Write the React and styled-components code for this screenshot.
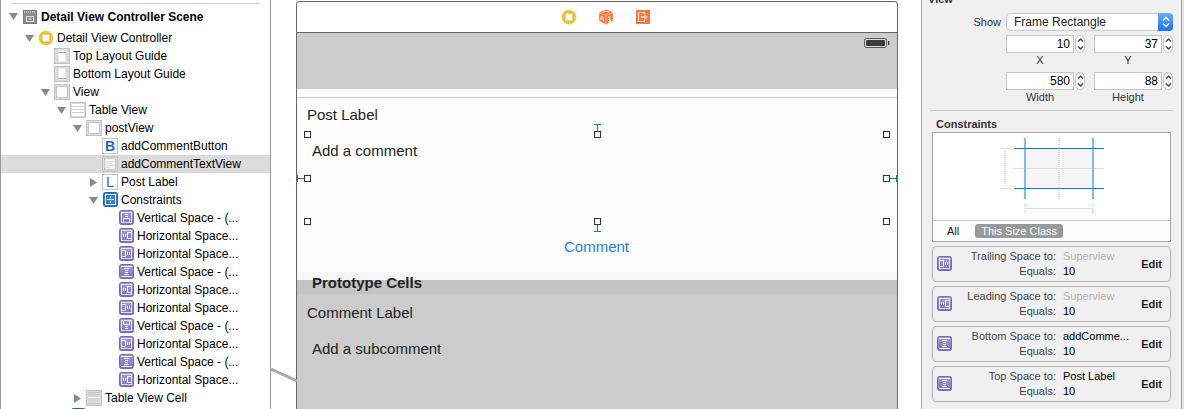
import styled, { createGlobalStyle } from "styled-components"

const GlobalStyle = createGlobalStyle`
  * {
    box-sizing: border-box;
  }
  body {
    margin: 0;
    background: #fff;
    font-family: "Liberation Sans", Arial, sans-serif;
    font-size: 12px;
    color: #000;
  }
  button, input, select {
    font-family: inherit;
    padding: 0;
    margin: 0;
  }
`

const tree = [
  { level: 0, icon: "scene", name: "Detail View Controller Scene", open: true, scene: true },
  { level: 1, icon: "controller", name: "Detail View Controller", open: true },
  { level: 2, icon: "topGuide", name: "Top Layout Guide" },
  { level: 2, icon: "bottomGuide", name: "Bottom Layout Guide" },
  { level: 2, icon: "view", name: "View", open: true },
  { level: 3, icon: "table", name: "Table View", open: true },
  { level: 4, icon: "view", name: "postView", open: true },
  { level: 5, icon: "B", name: "addCommentButton" },
  { level: 5, icon: "textView", name: "addCommentTextView", selected: true },
  { level: 5, icon: "L", name: "Post Label", open: false },
  { level: 5, icon: "constraints", name: "Constraints", open: true },
  { level: 6, icon: "top", name: "Vertical Space - (..." },
  { level: 6, icon: "leading", name: "Horizontal Space..." },
  { level: 6, icon: "trailing", name: "Horizontal Space..." },
  { level: 6, icon: "vertical", name: "Vertical Space - (..." },
  { level: 6, icon: "leading", name: "Horizontal Space..." },
  { level: 6, icon: "trailing", name: "Horizontal Space..." },
  { level: 6, icon: "bottom", name: "Vertical Space - (..." },
  { level: 6, icon: "trailing", name: "Horizontal Space..." },
  { level: 6, icon: "vertical", name: "Vertical Space - (..." },
  { level: 6, icon: "leading", name: "Horizontal Space..." },
  { level: 4, icon: "cell", name: "Table View Cell", open: false },
  { level: 3, icon: "constraints", name: "Constraints", open: false },
]

const constraints = [
  { icon: "trailing", label: "Trailing Space to:", target: "Superview", muted: true },
  { icon: "leading", label: "Leading Space to:", target: "Superview", muted: true },
  { icon: "vertical", label: "Bottom Space to:", target: "addComme..." },
  { icon: "vertical", label: "Top Space to:", target: "Post Label" },
]

const handles = [
  ["0%", "0%"],
  ["50%", "0%"],
  ["100%", "0%"],
  ["0%", "50%"],
  ["100%", "50%"],
  ["0%", "100%"],
  ["50%", "100%"],
  ["100%", "100%"],
]

const glyphs = {
  leading: "M4.5 6v3M6.5 6v3M12 4.5H8.5v6H12",
  trailing: "M8.5 6v3M10.5 6v3M3 4.5h3.5v6H3",
  vertical: "M2 2.5h11M2 12.5h11M5 4.5h5M6 6.500h3M6 8.500h3M5 10.5h5",
  top: "M6 4.500h3M6 6.500h3M4.5 12V8.5h6V12",
  bottom: "M6 8.500h3M6 10.5h3M4.5 3v3.500h6V3",
}

const ConstraintIcon = ({ type }) => (
  <svg width="16" height="16" viewBox="-1 0 16 16" aria-hidden="true">
    <defs>
      <linearGradient id="purple" x1="0" y1="0" x2="0" y2="1">
        <stop offset="0" stopColor="#a39cdc" />
        <stop offset="1" stopColor="#7b71c8" />
      </linearGradient>
    </defs>
    <rect x=".5" y=".5" width="14" height="14" rx="2" fill="url(#purple)" stroke="#7167bb" />
    {type !== "vertical" && (
      <rect x="2.5" y="2.5" width="10" height="10" fill="none" stroke="#fff" strokeOpacity=".75" />
    )}
    <path d={glyphs[type]} fill="none" stroke="#fff" />
  </svg>
)

const ControllerIcon = () => (
  <svg width="16" height="16" viewBox="0 0 16 16" aria-hidden="true">
    <circle cx="8" cy="8" r="7.3" fill="#fbc91d" />
    <rect x="4" y="4" width="8" height="8" fill="#fff" stroke="#c9a94a" />
    <path d="M3.500 3.500h1v1h-1zM11.5 3.500h1v1h-1zM3.500 11.5h1v1h-1zM11.5 11.5h1v1h-1z" fill="#fbe08a" />
  </svg>
)

const CubeIcon = () => (
  <svg width="16" height="16" viewBox="0 0 16 16" aria-hidden="true">
    <path d="M8 .5l6.8 3v8.2L8 15.5l-6.8-3.8V3.5z" fill="#fb7640" />
    <path d="M1.4 3.7L8 6.4l6.6-2.7M8 6.4v8.8" fill="none" stroke="#ffc3a6" strokeWidth=".8" />
    <path d="M3 11.2V7.4l2.2 1v3.8M3 9.4l2.2.9M4.6 3.3l3.2-1.2 3.4 1.2" fill="none" stroke="#ffe0d2" />
    <path d="M10.2 8.8l1.4-1v4.6M10 13l3-1.4" fill="none" stroke="#fff" strokeWidth="1.2" />
  </svg>
)

const ExitIcon = () => (
  <svg width="16" height="16" viewBox="0 0 16 16" aria-hidden="true">
    <rect x="1" y="1" width="14" height="14" fill="#fb7640" />
    <path d="M9.5 5V3.500h-6v9h6V11" fill="none" stroke="#ffe0d2" strokeWidth="1.2" />
    <path d="M6 7h3.500V4.800L13 8l-3.500 3.200V9H6z" fill="#ffd0ba" />
  </svg>
)

const BatteryIcon = () => (
  <svg width="26" height="10" viewBox="0 0 26 10" aria-hidden="true">
    <rect x=".5" y=".5" width="22" height="9" rx="2" fill="#ddd" stroke="#555" />
    <rect x="2" y="2" width="19" height="6" rx="1" fill="#3c3c3c" />
    <path d="M24 3h.5a1 1 0 011 1v2a1 1 0 01-1 1H24z" fill="#444" />
  </svg>
)

const ViewIcon = ({ type }) => (
  <svg width="16" height="16" viewBox="0 0 16 16" aria-hidden="true">
    <rect x=".5" y=".5" width="15" height="15" fill="#dcdcdc" stroke="#c2c2c2" />
    {type === "view" && <rect x="2.5" y="2.5" width="11" height="11" fill="#fff" stroke="#c6c6c6" />}
    {(type === "topGuide" || type === "bottomGuide") && (
      <rect x="4" y="2" width="8" height="12" fill="#fff" stroke="#ccc" strokeWidth=".6" />
    )}
    {type === "topGuide" && <path d="M4 4.5h8" stroke="#7fb2dd" />}
    {type === "bottomGuide" && <path d="M4 12.5h8" stroke="#7fb2dd" />}
    {type === "table" && (
      <>
        <rect x="2" y="2" width="12" height="12" fill="#fff" />
        <path d="M2 4.5h12M2 7.5h12M2 10.5h12" stroke="#d0d0d0" />
      </>
    )}
    {type === "cell" && (
      <>
        <path d="M2 2.5h12M2 4.5h12M2 13.5h12" stroke="#c8c8c8" />
        <rect x="2" y="6" width="12" height="5" fill="#d4d4d4" />
        <path d="M2 7.5h12" stroke="#fff" strokeWidth="1.2" />
      </>
    )}
    {type === "textView" && (
      <>
        <rect x="2.5" y="2.5" width="11" height="11" fill="#f3f3f3" stroke="#c6c6c6" />
        <path d="M4.5 5.5h7M4.5 7.5h6M4.5 9.5h7M4.5 11.5h4" stroke="#d2d2d2" strokeDasharray="2 1" />
      </>
    )}
  </svg>
)

const BlueIcon = () => (
  <svg width="16" height="16" viewBox="0 0 16 16" aria-hidden="true">
    <rect x="1.5" y=".5" width="14" height="14" rx="2" fill="#2f7fdd" stroke="#1a60bd" />
    <rect x="3.5" y="2.5" width="10" height="10" fill="none" stroke="#fff" />
    <path d="M8.5 4v7M5 7.5h7" stroke="#fff" strokeDasharray="2 .5" />
  </svg>
)

const SceneIcon = () => (
  <svg width="16" height="16" viewBox="0 0 16 16" aria-hidden="true">
    <rect x="1.5" y="1.5" width="13" height="13" fill="#8e8e8e" stroke="#7a7a7a" />
    <path d="M2 3h12" stroke="#c4c4c4" strokeWidth="2" strokeDasharray="1 1" />
    <rect x="4.5" y="7.5" width="7" height="5" fill="#8e8e8e" stroke="#dcdcdc" />
    <path d="M6 10h4" stroke="#dcdcdc" />
  </svg>
)

const Icon = ({ type }) => {
  if (type === "scene") return <SceneIcon />
  if (type === "controller") return <ControllerIcon />
  if (type === "constraints") return <BlueIcon />
  if (type === "B" || type === "L") return <LetterIcon $bold={type === "B"}>{type}</LetterIcon>
  if (glyphs[type]) return <ConstraintIcon type={type} />
  return <ViewIcon type={type} />
}

const TreeRow = ({ item }) => (
  <Row $level={item.level} $selected={item.selected} $scene={item.scene}>
    {item.open === undefined ? (
      <Spacer />
    ) : (
      <Disclosure aria-label={`Toggle ${item.name}`} aria-expanded={item.open}>
        <svg width="9" height="9" viewBox="0 0 9 9">
          <path d={item.open ? "M0 1h9L4.5 8z" : "M1 0v9l7-4.5z"} fill="#8a8a8a" />
        </svg>
      </Disclosure>
    )}
    <Icon type={item.icon} />
    <RowName>{item.name}</RowName>
  </Row>
)

const NumberField = ({ id, label, value }) => (
  <div>
    <FieldRow>
      <NumberInput id={id} defaultValue={value} />
      <Stepper>
        <StepButton aria-label={`Increase ${label}`}>
          <svg width="7" height="4" viewBox="0 0 7 4">
            <path d="M1 3.5L3.5 1 6 3.5" fill="none" stroke="#333" strokeWidth="1.2" />
          </svg>
        </StepButton>
        <StepButton aria-label={`Decrease ${label}`}>
          <svg width="7" height="4" viewBox="0 0 7 4">
            <path d="M1 .5L3.5 3 6 .5" fill="none" stroke="#333" strokeWidth="1.2" />
          </svg>
        </StepButton>
      </Stepper>
    </FieldRow>
    <FieldLabel htmlFor={id}>{label}</FieldLabel>
  </div>
)

const ConstraintDiagram = () => (
  <svg width="110" height="80" viewBox="-1 0 110 80" aria-hidden="true">
    <rect x="28" y="12" width="66" height="39" fill="#f5f5f5" />
    <g stroke="#dcdcdc" fill="none">
      <path d="M16 31.5h90M2 11.5h10M2 51.5h10M27 71.5h68" />
      <path d="M7 14v36M61 1v61M27 67v10M95 67v10" strokeWidth="2" strokeDasharray="1 1" />
    </g>
    <path d="M27 1v61M95 1v61" stroke="#7fb8f8" strokeWidth="2" />
    <path d="M16 11.5h90M16 51.5h90" stroke="#0b7af0" />
  </svg>
)

const App = () => (
  <>
    <GlobalStyle />
    <Workspace>
      <Outline>
        <Divider />
        <Tree>
          {tree.map((item, i) => (
            <TreeRow key={i} item={item} />
          ))}
        </Tree>
      </Outline>

      <Canvas>
        <Segue width="26" height="16" viewBox="0 0 26 16" aria-hidden="true">
          <path d="M0 2l26 12" stroke="#aaa" strokeWidth="3" />
        </Segue>
        <Device>
          <Dock>
            <ControllerIcon />
            <CubeIcon />
            <ExitIcon />
          </Dock>
          <StatusBar>
            <BatteryIcon />
          </StatusBar>
          <Gap />
          <PostView>
            <Label>Post Label</Label>
            <TextView>
              Add a comment
              <Tie $side="top" />
              <Tie $side="bottom" />
              <Tie $side="left" />
              <Tie $side="right" />
              {handles.map(([x, y]) => (
                <Handle key={x + y} $x={x} $y={y} />
              ))}
            </TextView>
            <CommentButton>Comment</CommentButton>
          </PostView>
          <SectionTop />
          <SectionHeader>Prototype Cells</SectionHeader>
          <Cell>
            <Label>Comment Label</Label>
            <SubComment>Add a subcomment</SubComment>
          </Cell>
        </Device>
      </Canvas>

      <Inspector>
        <SectionTitle>View</SectionTitle>
        <ShowRow>
          <label htmlFor="show">Show</label>
          <SelectWrap>
            <Select id="show">
              <option>Frame Rectangle</option>
            </Select>
            <SelectArrows>
              <svg width="8" height="12" viewBox="0 0 8 12" aria-hidden="true">
                <path d="M1 4.5l3-3 3 3M1 7.5l3 3 3-3" fill="none" stroke="#fff" strokeWidth="1.4" />
              </svg>
            </SelectArrows>
          </SelectWrap>
        </ShowRow>
        <Fields>
          <NumberField id="x" label="X" value="10" />
          <NumberField id="y" label="Y" value="37" />
          <NumberField id="width" label="Width" value="580" />
          <NumberField id="height" label="Height" value="88" />
        </Fields>
        <InspectorRule />
        <ConstraintsTitle>Constraints</ConstraintsTitle>
        <Preview>
          <DiagramArea>
            <ConstraintDiagram />
          </DiagramArea>
          <Filter>
            <FilterButton>All</FilterButton>
            <FilterButton $active>This Size Class</FilterButton>
          </Filter>
        </Preview>
        {constraints.map(c => (
          <Card key={c.label}>
            <ConstraintIcon type={c.icon} />
            <CardGrid>
              <CardLabel>{c.label}</CardLabel>
              <CardValue $muted={c.muted}>{c.target}</CardValue>
              <CardLabel>Equals:</CardLabel>
              <CardValue>10</CardValue>
            </CardGrid>
            <EditButton>Edit</EditButton>
          </Card>
        ))}
      </Inspector>
    </Workspace>
  </>
)

const Workspace = styled.main`
  display: flex;
  height: 100vh;
  overflow: hidden;
  background: #e2e2e2;
`

const Outline = styled.nav`
  flex: 0 0 271px;
  overflow: hidden;
  padding-top: 3px;
  background: #fff;
  border: solid #999;
  border-width: 0 1px;
`

const Divider = styled.div`
  height: 1px;
  margin: 0 10px;
  background: #d0d0d0;
`

const Tree = styled.ul`
  list-style: none;
  margin: 0;
  padding: 0;
`

const Row = styled.li`
  display: flex;
  align-items: center;
  height: ${p => (p.$scene ? 25 : 18)}px;
  padding-left: ${p => 8 + p.$level * 16}px;
  white-space: nowrap;
  font-weight: ${p => (p.$scene ? "bold" : "normal")};
  background: ${p => (p.$selected ? "#dcdcdc" : "transparent")};
  svg {
    flex: none;
  }
`

const RowName = styled.span`
  margin-left: 3px;
`

const Disclosure = styled.button`
  display: flex;
  width: 9px;
  margin-right: 4px;
  border: 0;
  background: none;
`

const Spacer = styled.i`
  width: 9px;
  margin-right: 4px;
`

const LetterIcon = styled.span`
  width: 16px;
  height: 16px;
  border: 1px solid #c4c4c4;
  background: #fff;
  color: #1a66d6;
  font-size: 14px;
  font-weight: ${p => (p.$bold ? "bold" : "normal")};
  line-height: 14px;
  text-align: center;
`

const Canvas = styled.section`
  position: relative;
  flex: 1;
  min-width: 0;
  display: flex;
  padding: 1px 23px 0 25px;
  background: #fff;
`

const Segue = styled.svg`
  position: absolute;
  left: 0;
  top: 367px;
`

const Device = styled.div`
  flex: 1;
  border: 1px solid #666;
  border-bottom: 0;
  border-radius: 4px 4px 0 0;
  background: #ccc;
  overflow: hidden;
  color: #222;
  font-size: 15px;
  line-height: 18px;
`

const Dock = styled.div`
  display: flex;
  justify-content: center;
  align-items: center;
  gap: 21px;
  height: 31px;
  padding-left: 18px;
  background: #fff;
  border-bottom: 1px solid #666;
`

const StatusBar = styled.div`
  display: flex;
  justify-content: flex-end;
  height: 56px;
  padding: 5px 7px;
`

const Gap = styled.div`
  height: 9px;
  background: #fefefe;
  border-bottom: 1px solid #c8c8c8;
`

const PostView = styled.div`
  display: flex;
  flex-direction: column;
  height: 174px;
  padding: 8px 11px 8px 10px;
  background: #fefefe;
`

const Label = styled.div`
  height: 18px;
`

const TextView = styled.div`
  position: relative;
  flex: none;
  height: 87px;
  margin-top: 10px;
  padding: 8px 5px;
`

const Handle = styled.i`
  position: absolute;
  left: ${p => p.$x};
  top: ${p => p.$y};
  width: 7px;
  height: 7px;
  margin: -3px 0 0 -3px;
  border: 1px solid #333;
  background: #fff;
`

const tieSides = {
  top: "left: 50%; top: -10px; margin-left: -3px; border-top: 1px solid #1c76bd;",
  bottom: "left: 50%; bottom: -11px; margin-left: -3px; border-bottom: 1px solid #1c76bd;",
  left: "left: -10px; top: 50%; margin-top: -3px; border-left: 1px solid #1c76bd;",
  right: "right: -11px; top: 50%; margin-top: -3px; border-right: 1px solid #1c76bd;",
}

const Tie = styled.i`
  position: absolute;
  width: 7px;
  height: 7px;
  ${p => tieSides[p.$side]}
  &::before {
    content: "";
    position: absolute;
    background: #1c76bd;
    ${p =>
      p.$side === "top" || p.$side === "bottom"
        ? "left: 3px; top: 0; width: 1px; height: 100%;"
        : "left: 0; top: 3px; width: 100%; height: 1px;"}
  }
`

const CommentButton = styled.button`
  align-self: center;
  margin-top: 17px;
  border: 0;
  background: none;
  color: #1f7ff0;
  font-size: 15px;
  line-height: 18px;
`

const SectionTop = styled.div`
  height: 8px;
  background: #f6f6f6;
`

const SectionHeader = styled.div`
  height: 14px;
  padding-left: 15px;
  background: #c4c4c4;
  font-weight: bold;
  line-height: 6px;
`

const Cell = styled.div`
  padding: 10px;
`

const SubComment = styled.div`
  padding: 18px 5px;
`

const Inspector = styled.aside`
  flex: 0 0 261px;
  margin-right: 2px;
  padding: 0 10px;
  background: #f0f0f0;
  border: solid #a6a6a6;
  border-width: 0 1px;
  overflow: hidden;
  color: #333;
  font-size: 11px;
  line-height: 14px;
`

const SectionTitle = styled.div`
  height: 14px;
  margin: -8px 0 0 -4px;
  font-weight: bold;
`

const ShowRow = styled.div`
  display: flex;
  justify-content: flex-end;
  align-items: center;
  gap: 5px;
  height: 18px;
  margin: 7px -2px 0 0;
`

const SelectWrap = styled.div`
  position: relative;
  width: 167px;
  height: 18px;
`

const Select = styled.select`
  appearance: none;
  width: 100%;
  height: 18px;
  padding-left: 7px;
  border: 1px solid #ccc;
  border-radius: 4px;
  background: #fff;
  color: #222;
  font-size: 12px;
`

const SelectArrows = styled.span`
  position: absolute;
  top: 0;
  right: 0;
  display: flex;
  align-items: center;
  justify-content: center;
  width: 15px;
  height: 18px;
  border-radius: 0 4px 4px 0;
  background: linear-gradient(#66adfb, #1a73f5);
  pointer-events: none;
`

const Fields = styled.div`
  display: grid;
  grid-template-columns: 79px 79px;
  justify-content: end;
  gap: 5px 9px;
  margin: 4px -2px 0 0;
`

const FieldRow = styled.div`
  display: flex;
  gap: 1px;
`

const NumberInput = styled.input`
  width: 68px;
  height: 18px;
  padding-right: 3px;
  border: 1px solid #c4c4c4;
  background: #fff;
  font-size: 12px;
  text-align: right;
`

const Stepper = styled.div`
  display: flex;
  flex-direction: column;
  width: 10px;
  height: 18px;
  border: 1px solid #c4c4c4;
  border-radius: 5px;
  background: #fff;
`

const StepButton = styled.button`
  flex: 1;
  display: flex;
  align-items: center;
  justify-content: center;
  border: 0;
  background: none;
`

const FieldLabel = styled.label`
  display: block;
  width: 68px;
  text-align: center;
`

const InspectorRule = styled.div`
  height: 1px;
  margin: 6px -2px 0;
  background: #ccc;
`

const ConstraintsTitle = styled.div`
  margin: 6px 4px 1px;
  font-weight: bold;
`

const Preview = styled.div`
  border: 1px solid #a6a6a6;
  background: #fff;
`

const DiagramArea = styled.div`
  display: flex;
  justify-content: center;
  height: 87px;
  padding-top: 4px;
`

const Filter = styled.div`
  display: flex;
  align-items: center;
  gap: 10px;
  height: 21px;
  padding-left: 8px;
  border-top: 1px solid #c8c8c8;
  background: #fcfcfc;
`

const FilterButton = styled.button`
  height: 14px;
  padding: 0 6px;
  border: 0;
  border-radius: 3px;
  background: ${p => (p.$active ? "#999" : "none")};
  color: ${p => (p.$active ? "#fff" : "#222")};
  font-size: 11px;
  line-height: 14px;
`

const Card = styled.div`
  display: flex;
  align-items: center;
  height: 36px;
  margin-top: 4px;
  padding: 0 8px 0 3px;
  border: 1px solid #b4b4b4;
  border-radius: 4px;
`

const CardGrid = styled.div`
  flex: 1;
  display: grid;
  grid-template-columns: 104px 1fr;
  column-gap: 7px;
  line-height: 15px;
`

const CardLabel = styled.span`
  text-align: right;
  color: #444;
  white-space: nowrap;
`

const CardValue = styled.span`
  color: ${p => (p.$muted ? "#b4b4b4" : "#000")};
  white-space: nowrap;
`

const EditButton = styled.button`
  border: 0;
  background: none;
  color: #222;
  font-size: 11px;
  font-weight: bold;
`

export default App
